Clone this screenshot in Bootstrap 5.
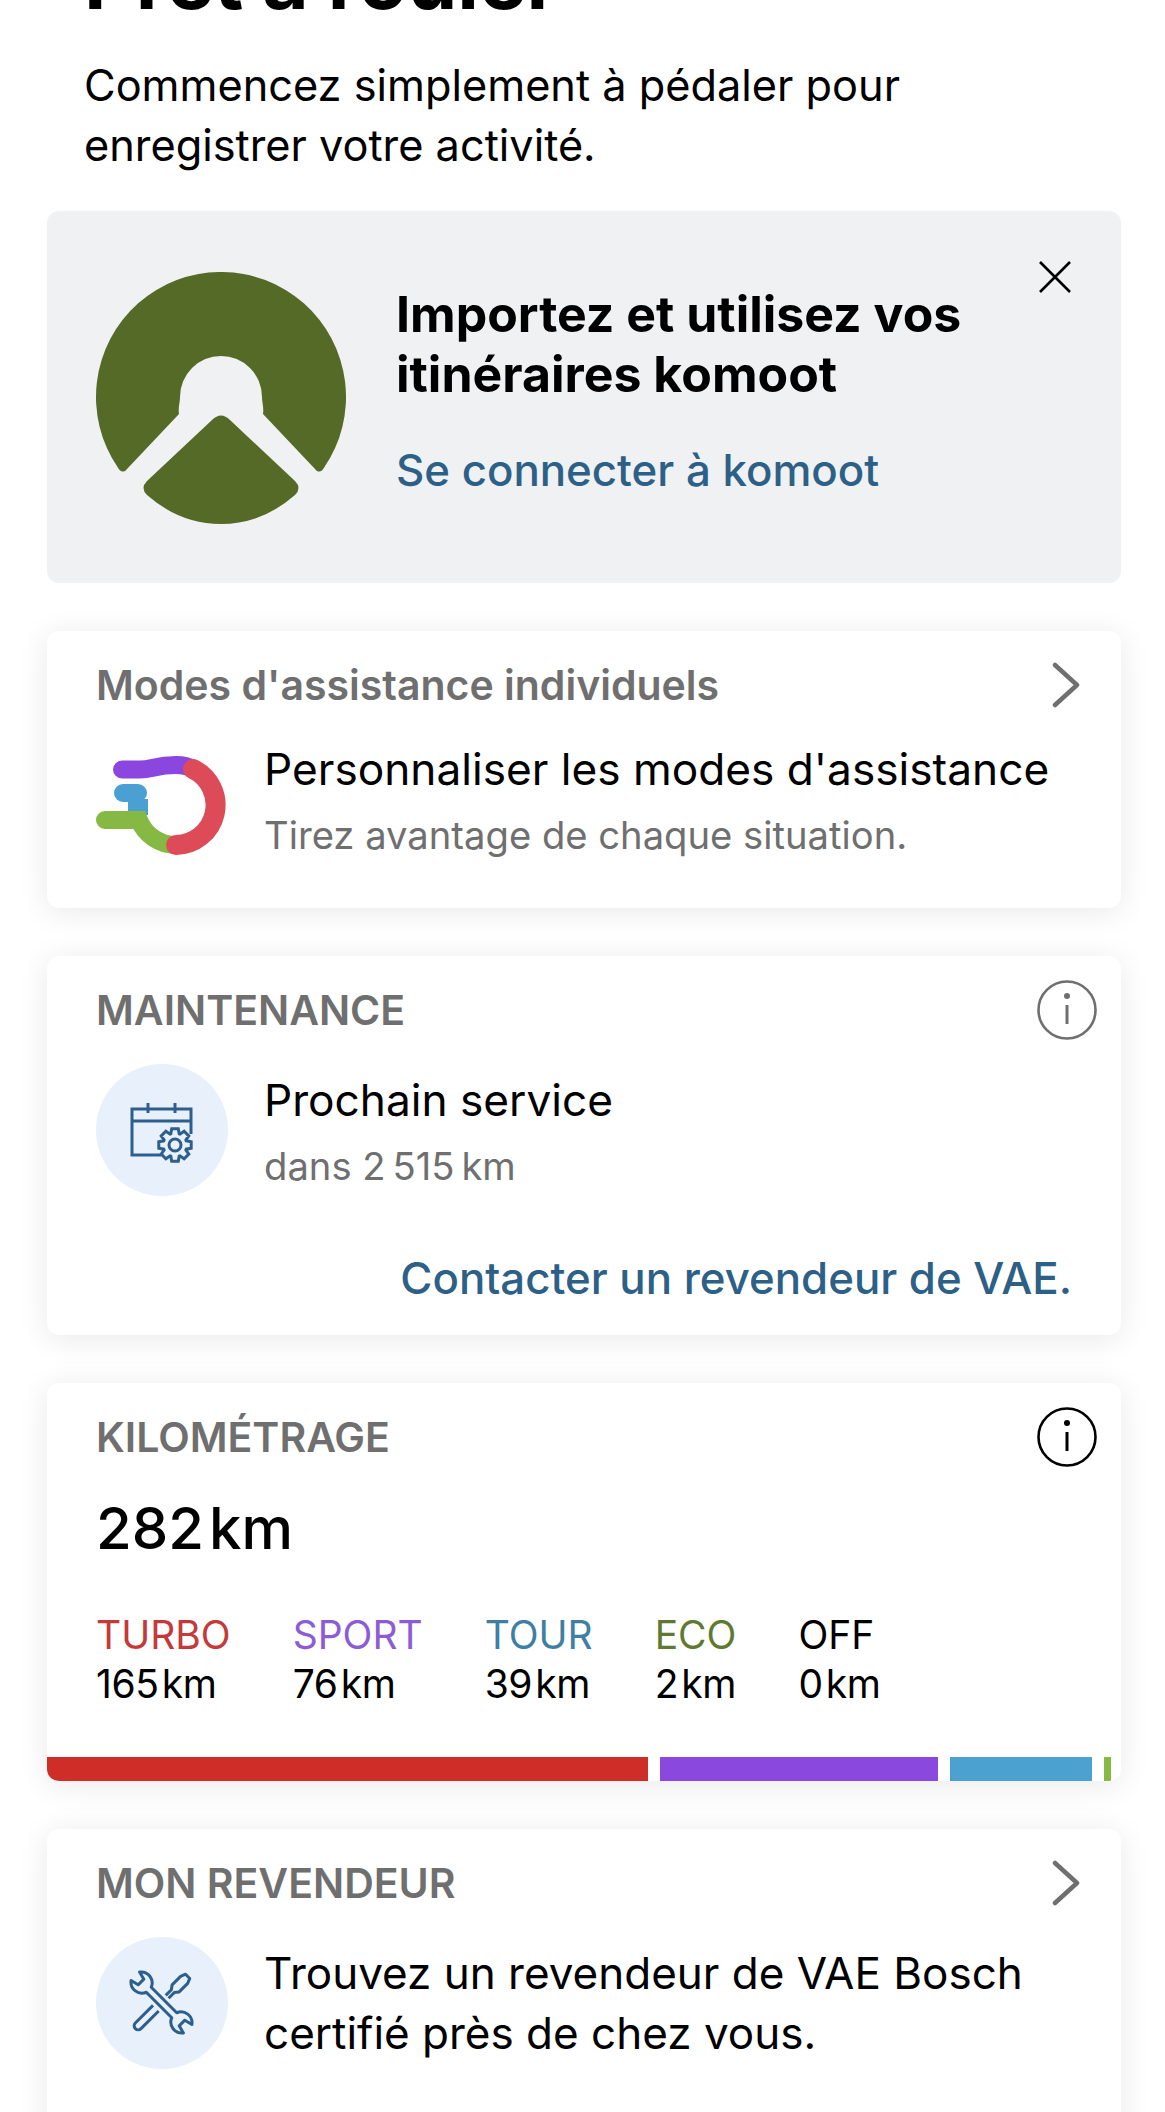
<!DOCTYPE html>
<html lang="fr">
<head>
  <meta charset="UTF-8">
  <meta name="viewport" content="width=device-width, initial-scale=1">
  <title>Prêt à rouler</title>
  <link href="https://cdn.jsdelivr.net/npm/bootstrap@5.3.3/dist/css/bootstrap.min.css" rel="stylesheet">
  <style>
    html, body { height: 2112px; overflow: hidden; }
    body { font-family: Inter, "Liberation Sans", sans-serif; color: #000; background: #fff; font-size: 44px; line-height: 60px; }
    .page-head { padding: 0 84px; margin-top: -67px; }
    .page-title { font-size: 80px; line-height: 94px; font-weight: 700; margin: 0 0 28px; }
    .page-intro { font-size: 43.3px; line-height: 60px; margin: 0; }
    .info-card { margin: 0 44px 48px 47px; border: 0; border-radius: 12px; padding: 24px 49px 0; box-shadow: 0 4px 32px rgba(0,0,0,.09); }
    .komoot-card { margin-top: 36px; background: #eff1f3; box-shadow: none; height: 372px; padding: 61px 49px 0; }
    .komoot-text { margin: 12px 0 0 50px; }
    .komoot-title { font-size: 50px; line-height: 60px; font-weight: 700; margin: 0 0 36px; }
    .close-x { position: absolute; top: 50px; right: 50px; }
    .link-blue { color: #2d6087; text-decoration: none; font-size: 43.8px; font-weight: 500; }
    .card-label { font-size: 41px; line-height: 60px; font-weight: 600; color: #6f6f6f; }
    .row-icon { width: 132px; height: 132px; margin-right: 36px; flex: none; }
    .bubble { background: #e8f0fb; }
    .row-body { margin-top: 24px; height: 132px; }
    .row-body p { margin: 0; }
    .row-text { font-size: 44.2px; }
    .nudge-up { margin-bottom: 6px; }
    .nudge-down { margin-top: 6px; }
    .muted-line { color: #6f6f6f; font-size: 38.2px; margin-top: 6px !important; }
    .contact-line { margin-top: 52px; height: 87px; }
    .total-km { font-size: 58px; line-height: 72px; margin-top: 25px; font-weight: 500; }
    .mode-list { margin-top: 46px; gap: 62px; font-size: 39px; line-height: 49px; }
    .mode-km { letter-spacing: -.4px; }
    .bars { margin: 49px -49px 0; height: 24px; gap: 12px; border-radius: 0 0 12px 12px; overflow: hidden; }
    .pull-chevron { margin-right: -9px; }
    .pull-info { margin-right: -25px; }
    .last-card { padding-bottom: 80px; }
    .c-turbo { color: #c43a3a; }
    .c-sport { color: #8c5bd6; }
    .c-tour { color: #3e7fa3; }
    .c-eco { color: #5f7a30; }
    .b-turbo { background: #cf2d28; }
    .b-sport { background: #8b48df; }
    .b-tour { background: #4ba2d1; }
    .b-eco { background: #85b944; }
  </style>
</head>
<body>
  <div class="page-head">
    <h1 class="page-title">Prêt à rouler</h1>
    <p class="page-intro">Commencez simplement à pédaler pour<br>enregistrer votre activité.</p>
  </div>

  <div class="card info-card komoot-card flex-row align-items-start">
    <svg width="250" height="252" viewBox="0 0 250 252" class="flex-none">
      <path fill="#566a27" d="M31 197C28 201 24 200 22 195.8A125 125 0 1 1 228 195.8C226 200 222 201 219 197L167 142C168 135 166 131 166 125A41 41 0 0 0 84 125C84 131 82 135 83 142Z"/>
      <path fill="#566a27" d="M116 148Q125 139 134 148L199 209Q206 216 199 223Q166 252 125 252Q84 252 51 223Q44 216 51 209Z"/>
    </svg>
    <div class="komoot-text">
      <h2 class="komoot-title">Importez et utilisez vos<br>itinéraires komoot</h2>
      <a href="#" class="link-blue">Se connecter à komoot</a>
    </div>
    <svg class="close-x" width="32" height="32" viewBox="0 0 32 32"><path d="M1 1L31 31M31 1L1 31" stroke="#000" stroke-width="2.6" fill="none"/></svg>
  </div>

  <div class="card info-card">
    <div class="d-flex justify-content-between align-items-center">
      <span class="card-label">Modes d'assistance individuels</span>
      <svg class="pull-chevron" width="30" height="46" viewBox="0 0 30 46"><path d="M4 3L26 23L4 43" stroke="#6f6f6f" stroke-width="4.5" stroke-linecap="round" stroke-linejoin="round" fill="none"/></svg>
    </div>
    <div class="row-body d-flex align-items-center">
      <div class="row-icon d-flex align-items-center">
        <svg width="130" height="100" viewBox="0 0 130 100" fill="none" stroke-linecap="round">
          <rect x="32" y="44" width="20" height="16" fill="#4aa0d2"/>
          <path d="M27 38H42" stroke="#4aa0d2" stroke-width="18"/>
          <path d="M9 65H43A40 40 0 0 0 80 90" stroke="#85b944" stroke-width="18"/>
          <path d="M26 14.5H44C56 14.5 60 10 80 10C86 10 92 11 97 14" stroke="#8b46e0" stroke-width="18"/>
          <path d="M97 14A40 40 0 0 1 80 90" stroke="#dd4a58" stroke-width="20"/>
        </svg>
      </div>
      <div class="row-text nudge-up">
        <p>Personnaliser les modes d'assistance</p>
        <p class="muted-line">Tirez avantage de chaque situation.</p>
      </div>
    </div>
    <div style="height:37px"></div>
  </div>

  <div class="card info-card">
    <div class="d-flex justify-content-between align-items-center">
      <span class="card-label text-uppercase">Maintenance</span>
      <svg class="pull-info" width="60" height="60" viewBox="0 0 60 60"><circle cx="30" cy="30" r="28.5" stroke="#6f6f6f" stroke-width="2.6" fill="none"/><circle cx="30" cy="16" r="3" fill="#6f6f6f"/><path d="M30 25V44" stroke="#6f6f6f" stroke-width="3"/></svg>
    </div>
    <div class="row-body d-flex align-items-center">
      <div class="row-icon bubble rounded-circle">
        <svg width="132" height="132" viewBox="0 0 132 132" fill="none" stroke="#2c5f8d" stroke-width="3">
          <path d="M65 91H36V45H95V70M36 57H95M52 39V49M79 39V49"/>
          <path id="gearPath" fill="#e8f0fb" d=""/>
          <circle cx="79" cy="81" r="6"/>
        </svg>
      </div>
      <div class="row-text nudge-down">
        <p>Prochain service</p>
        <p class="muted-line">dans 2&#8239;515&#8239;km</p>
      </div>
    </div>
    <div class="contact-line text-end"><a href="#" class="link-blue">Contacter un revendeur de VAE.</a></div>
  </div>

  <div class="card info-card">
    <div class="d-flex justify-content-between align-items-center">
      <span class="card-label text-uppercase">Kilométrage</span>
      <svg class="pull-info" width="60" height="60" viewBox="0 0 60 60"><circle cx="30" cy="30" r="28.5" stroke="#000" stroke-width="2.6" fill="none"/><circle cx="30" cy="16" r="3" fill="#000"/><path d="M30 25V44" stroke="#000" stroke-width="3"/></svg>
    </div>
    <div class="total-km">282&#8202;km</div>
    <div class="mode-list d-flex" id="modeList"></div>
    <div class="bars d-flex" id="modeBars"></div>
  </div>

  <div class="card info-card last-card">
    <div class="d-flex justify-content-between align-items-center">
      <span class="card-label text-uppercase">Mon revendeur</span>
      <svg class="pull-chevron" width="30" height="46" viewBox="0 0 30 46"><path d="M4 3L26 23L4 43" stroke="#6f6f6f" stroke-width="4.5" stroke-linecap="round" stroke-linejoin="round" fill="none"/></svg>
    </div>
    <div class="row-body d-flex align-items-center">
      <div class="row-icon bubble rounded-circle">
        <svg width="132" height="132" viewBox="0 0 132 132" fill="none" stroke="#2c5f8d" stroke-width="3" stroke-linejoin="round">
          <g transform="translate(65.5 65.5) rotate(-45)">
            <path d="M-8 -4H-33A4 4 0 0 0 -33 4H-8"/>
            <path d="M8 -2H16L20 -5H32L37 -3V3L32 5H20L16 2H8"/>
          </g>
          <g transform="translate(65.5 65.5) rotate(45)">
            <path d="M-18 -3.5H18A11 11 0 0 1 37 -6L29 -4V4L37 6A11 11 0 0 1 18 3.5H-18A11 11 0 0 1 -37 6L-29 4V-4L-37 -6A11 11 0 0 1 -18 -3.5Z"/>
          </g>
        </svg>
      </div>
      <div>
        <p>Trouvez un revendeur de VAE Bosch<br>certifié près de chez vous.</p>
      </div>
    </div>
  </div>

  <script src="https://cdn.jsdelivr.net/npm/bootstrap@5.3.3/dist/js/bootstrap.bundle.min.js"></script>
  <script>
    const modes = [
      { name: 'TURBO', km: 165, key: 'turbo', width: 601 },
      { name: 'SPORT', km: 76, key: 'sport', width: 278 },
      { name: 'TOUR', km: 39, key: 'tour', width: 142 },
      { name: 'ECO', km: 2, key: 'eco', width: 7 },
      { name: 'OFF', km: 0, key: 'off', width: 0 }
    ];

    const modeList = document.getElementById('modeList');
    const modeBars = document.getElementById('modeBars');
    modes.forEach(mode => {
      modeList.innerHTML += `<div><div class="c-${mode.key}">${mode.name}</div><div class="mode-km">${mode.km}\u200akm</div></div>`;
      if (mode.width) {
        modeBars.innerHTML += `<div class="b-${mode.key}" style="width:${mode.width}px"></div>`;
      }
    });

    // contour de la roue dentée, 8 dents autour de (79,81)
    let gear = '';
    for (let i = 0; i < 8; i++) {
      const a = i * Math.PI / 4;
      [[12, -.36], [16.5, -.2], [16.5, .2], [12, .36]].forEach(([r, d]) => {
        const x = 79 + r * Math.cos(a + d);
        const y = 81 + r * Math.sin(a + d);
        gear += `${gear ? 'L' : 'M'}${x.toFixed(1)} ${y.toFixed(1)}`;
      });
    }
    document.getElementById('gearPath').setAttribute('d', gear + 'Z');
  </script>
</body>
</html>
